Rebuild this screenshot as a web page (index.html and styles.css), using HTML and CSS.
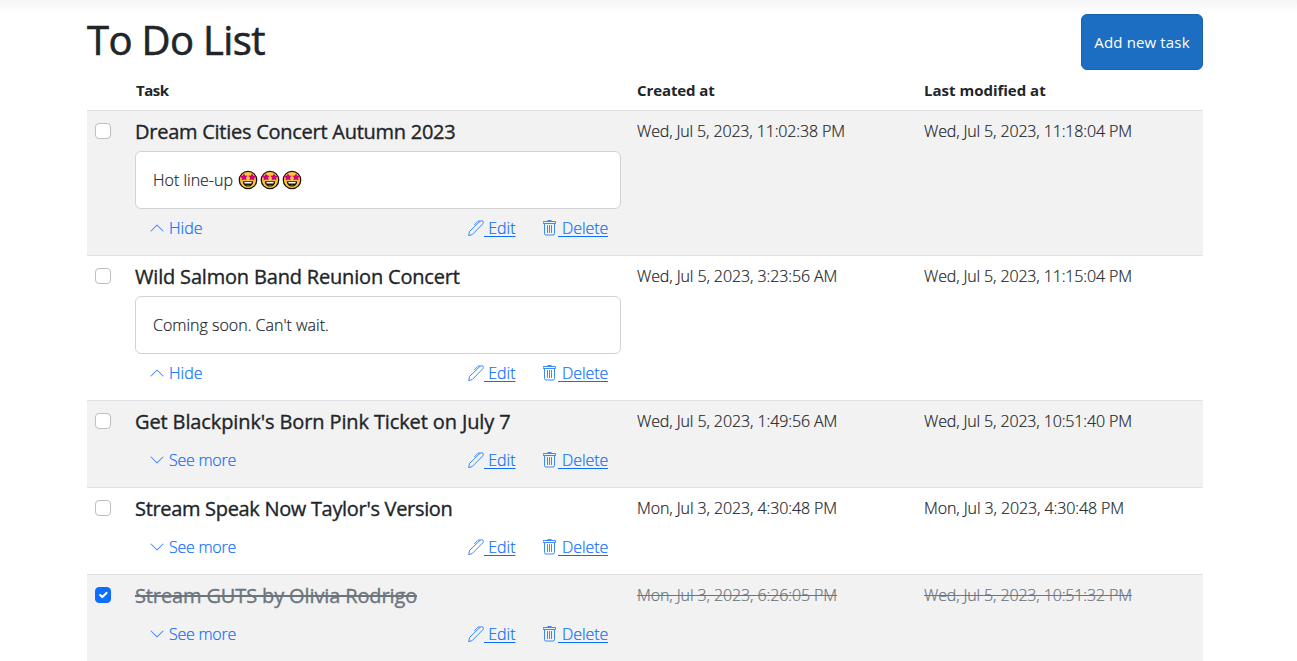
FILE: index.html
```html
<!DOCTYPE html>
<html lang="en">
<head>
<meta charset="utf-8">
<title>To Do List</title>
<link rel="stylesheet" href="styles.css">
</head>
<body>
<svg class="sprite" aria-hidden="true">
  <symbol id="up" viewBox="0 0 16 16"><path fill-rule="evenodd" d="M7.646 4.646a.5.5 0 0 1 .708 0l6 6a.5.5 0 0 1-.708.708L8 5.707l-5.646 5.647a.5.5 0 0 1-.708-.708l6-6z"/></symbol>
  <symbol id="down" viewBox="0 0 16 16"><path fill-rule="evenodd" d="M1.646 4.646a.5.5 0 0 1 .708 0L8 10.293l5.646-5.647a.5.5 0 0 1 .708.708l-6 6a.5.5 0 0 1-.708 0l-6-6a.5.5 0 0 1 0-.708z"/></symbol>
  <symbol id="pen" viewBox="0 0 16 16"><path fill="none" stroke="currentColor" stroke-linejoin="round" stroke-linecap="round" d="M.7 15.300l.9-3.900L12.200 1.200Q13.500.2 14.900 1.100 15.800 2.500 14.800 3.800L4.500 14.300zM6.500 4.700L9.900 1.300Q11 .4 12.200 1.200"/></symbol>
  <symbol id="trash" viewBox="0 0 16 16"><path fill="none" stroke="currentColor" stroke-linejoin="round" stroke-linecap="round" d="M1.500 1.500h12v2h-12zM5.500 1.500v-.5q0-.5.5-.5h3q.5 0 .5.5v.5M2.500 3.500v10q0 1.500 1.500 1.500h7q1.500 0 1.500-1.500v-10M5.500 5.500v7M7.500 5.500v7M9.500 5.500v7"/></symbol>
  <symbol id="starstruck" viewBox="0 0 20 20">
    <circle cx="10" cy="10" r="8.700" fill="#ffc83d" stroke="#17130b" stroke-width="1.300"/>
    <path fill="#d3007f" d="M6 3.400l1.200 2.100 2.400.3-1.600 1.900.5 2.600L6 9.400l-2.500 1.200.4-2.700-2-1.800 2.700-.4z"/>
    <path fill="#d3007f" d="M14 3.400l1.400 2.300 2.700.4-2 1.800.4 2.700L14 9.400l-2.500.9.5-2.600-1.600-1.900 2.400-.3z"/>
    <path fill="#17130b" d="M4.800 11.300h10.400c0 3.100-2.200 5.300-5.200 5.300s-5.200-2.200-5.200-5.300z"/>
    <path fill="#fff" d="M6.200 12h7.600l-.5 1.500H6.700z"/>
    <path fill="#e33b2e" d="M8 15.400c1-.9 3-.9 4 0-1 .6-3 .6-4 0z"/>
  </symbol>
</svg>
<main class="page">
  <header class="top">
    <h1 class="heading">To Do List</h1>
    <button class="add"><span>Add new task</span></button>
  </header>
  <section class="table">
    <div class="row head">
      <div class="cell"></div><div class="cell"><span class="th-task">Task</span></div>
      <div class="cell"><span class="th-created">Created at</span></div><div class="cell"><span class="th-modified">Last modified at</span></div>
    </div>
    <div class="row striped">
      <div class="cell"><span class="check"></span></div>
      <div class="cell task">
        <h2 class="title t1"><span>Dream Cities Concert Autumn 2023</span></h2>
        <div class="note"><span class="hot">Hot line-up</span><span class="emojis"><svg><use href="#starstruck"/></svg><svg><use href="#starstruck"/></svg><svg><use href="#starstruck"/></svg></span></div>
        <div class="actions"><a class="toggle"><svg class="icon"><use href="#up"/></svg><span class="hide">Hide</span></a><a class="link edit"><svg class="icon"><use href="#pen"/></svg><span>&nbsp;Edit</span></a><a class="link delete"><svg class="icon"><use href="#trash"/></svg><span>&nbsp;Delete</span></a></div>
      </div>
      <div class="cell"><span class="date">Wed, Jul 5, 2023, 11:02:38 PM</span></div>
      <div class="cell"><span class="date">Wed, Jul 5, 2023, 11:18:04 PM</span></div>
    </div>
    <div class="row">
      <div class="cell"><span class="check"></span></div>
      <div class="cell task">
        <h2 class="title t2"><span>Wild Salmon Band Reunion Concert</span></h2>
        <div class="note"><span class="soon">Coming soon. Can't wait.</span></div>
        <div class="actions"><a class="toggle"><svg class="icon"><use href="#up"/></svg><span class="hide">Hide</span></a><a class="link edit"><svg class="icon"><use href="#pen"/></svg><span>&nbsp;Edit</span></a><a class="link delete"><svg class="icon"><use href="#trash"/></svg><span>&nbsp;Delete</span></a></div>
      </div>
      <div class="cell"><span class="date short">Wed, Jul 5, 2023, 3:23:56 AM</span></div>
      <div class="cell"><span class="date">Wed, Jul 5, 2023, 11:15:04 PM</span></div>
    </div>
    <div class="row striped">
      <div class="cell"><span class="check"></span></div>
      <div class="cell task">
        <h2 class="title t3"><span>Get Blackpink's Born Pink Ticket on July 7</span></h2>
        <div class="actions"><a class="toggle"><svg class="icon"><use href="#down"/></svg><span class="more">See more</span></a><a class="link edit"><svg class="icon"><use href="#pen"/></svg><span>&nbsp;Edit</span></a><a class="link delete"><svg class="icon"><use href="#trash"/></svg><span>&nbsp;Delete</span></a></div>
      </div>
      <div class="cell"><span class="date short">Wed, Jul 5, 2023, 1:49:56 AM</span></div>
      <div class="cell"><span class="date">Wed, Jul 5, 2023, 10:51:40 PM</span></div>
    </div>
    <div class="row">
      <div class="cell"><span class="check"></span></div>
      <div class="cell task">
        <h2 class="title t4"><span>Stream Speak Now Taylor's Version</span></h2>
        <div class="actions"><a class="toggle"><svg class="icon"><use href="#down"/></svg><span class="more">See more</span></a><a class="link edit"><svg class="icon"><use href="#pen"/></svg><span>&nbsp;Edit</span></a><a class="link delete"><svg class="icon"><use href="#trash"/></svg><span>&nbsp;Delete</span></a></div>
      </div>
      <div class="cell"><span class="date short">Mon, Jul 3, 2023, 4:30:48 PM</span></div>
      <div class="cell"><span class="date short">Mon, Jul 3, 2023, 4:30:48 PM</span></div>
    </div>
    <div class="row striped done">
      <div class="cell"><span class="check checked"><svg viewBox="0 0 20 20"><path fill="none" stroke="#fff" stroke-linecap="round" stroke-linejoin="round" stroke-width="3" d="m6 10 3 3 6-6"/></svg></span></div>
      <div class="cell task">
        <h2 class="title t5"><span>Stream GUTS by Olivia Rodrigo</span></h2>
        <div class="actions"><a class="toggle"><svg class="icon"><use href="#down"/></svg><span class="more">See more</span></a><a class="link edit"><svg class="icon"><use href="#pen"/></svg><span>&nbsp;Edit</span></a><a class="link delete"><svg class="icon"><use href="#trash"/></svg><span>&nbsp;Delete</span></a></div>
      </div>
      <div class="cell"><span class="date short">Mon, Jul 3, 2023, 6:26:05 PM</span></div>
      <div class="cell"><span class="date">Wed, Jul 5, 2023, 10:51:32 PM</span></div>
    </div>
  </section>
</main>
</body>
</html>
```
FILE: styles.css
```css
* { box-sizing: border-box; }
html { overflow: hidden; }
body {
  margin: 0;
  height: 661px;
  overflow: hidden;
  background: linear-gradient(#f5f5f5, #fff 13px) no-repeat #fff;
  color: #212529;
  font: 300 16px/24px "Open Sans", "Noto Sans", sans-serif;
  -webkit-text-stroke: .2px currentColor;
}
.sprite { display: none; }
.page { width: 1116px; margin-left: 87px; padding-top: 14px; }
.top { display: flex; justify-content: space-between; align-items: flex-start; height: 56px; }
.heading {
  margin: 2px 0 0;
  font-size: 40px;
  font-weight: 400;
  line-height: 48px;
  letter-spacing: -.65px;
  white-space: nowrap;
  -webkit-text-stroke-width: .6px;
}
.add {
  width: 122px;
  height: 56px;
  padding: 0;
  border: 1px solid #1861ac;
  border-radius: 6px;
  background: #1b6ec2;
  color: #fff;
  font: 400 15px/24px "Open Sans", "Noto Sans", sans-serif;
  letter-spacing: .15px;
  white-space: nowrap;
  -webkit-text-stroke-width: 0;
}
.row {
  display: grid;
  grid-template-columns: 40px 502px 287px 287px;
  border-top: 1px solid #dee2e6;
}
.head {
  border-top: 0;
  height: 40px;
  font-size: 15px;
  font-weight: 700;
  -webkit-text-stroke-width: 0;
}
.th-task { padding-left: 1px; letter-spacing: -.5px; }
.th-created { letter-spacing: -.1px; }
.striped { background: #f2f2f2; }
.cell { padding: 8px; white-space: nowrap; }
.check {
  display: block;
  width: 16px;
  height: 16px;
  margin-top: 4px;
  border: 1px solid #bfbfbf;
  border-radius: 4px;
  background: #fff;
}
.checked { border-color: #0d6efd; background: #0d6efd; }
.checked svg { display: block; width: 14px; height: 14px; }
.title {
  height: 24px;
  margin: 0 0 8px;
  padding-top: 1px;
  font-size: 20px;
  font-weight: 400;
  line-height: 24px;
  -webkit-text-stroke-width: .35px;
}
.t1 { letter-spacing: -.26px; }
.t2 { letter-spacing: -.18px; }
.t3 { letter-spacing: -.12px; }
.t4 { letter-spacing: -.32px; }
.t5 { letter-spacing: -.13px; }
.date { letter-spacing: -.14px; }
.short { letter-spacing: -.1px; }
.note {
  display: flex;
  align-items: center;
  height: 58px;
  padding: 0 17px;
  border: 1px solid #d2d2d2;
  border-radius: 6px;
  background: #fff;
}
.emojis { display: flex; gap: 2px; margin-left: 5.5px; }
.emojis svg { width: 20px; height: 20px; }
.actions {
  display: grid;
  grid-template-columns: 333px 74px 1fr;
  align-items: center;
  height: 38px;
  color: #0d6efd;
}
.toggle, .link { display: flex; align-items: center; }
.toggle { padding-left: 14px; gap: 4px; }
.more { letter-spacing: -.25px; }
.icon { width: 16px; height: 16px; fill: currentColor; flex: none; opacity: .8; }
.link { text-decoration: none; }
.link span { text-decoration: underline; text-underline-offset: 2px; }
.delete span { letter-spacing: -.1px; }
.done .title, .done .date { color: #6c757d; text-decoration: line-through; }
.done .title { text-decoration-thickness: 2px; }
```
